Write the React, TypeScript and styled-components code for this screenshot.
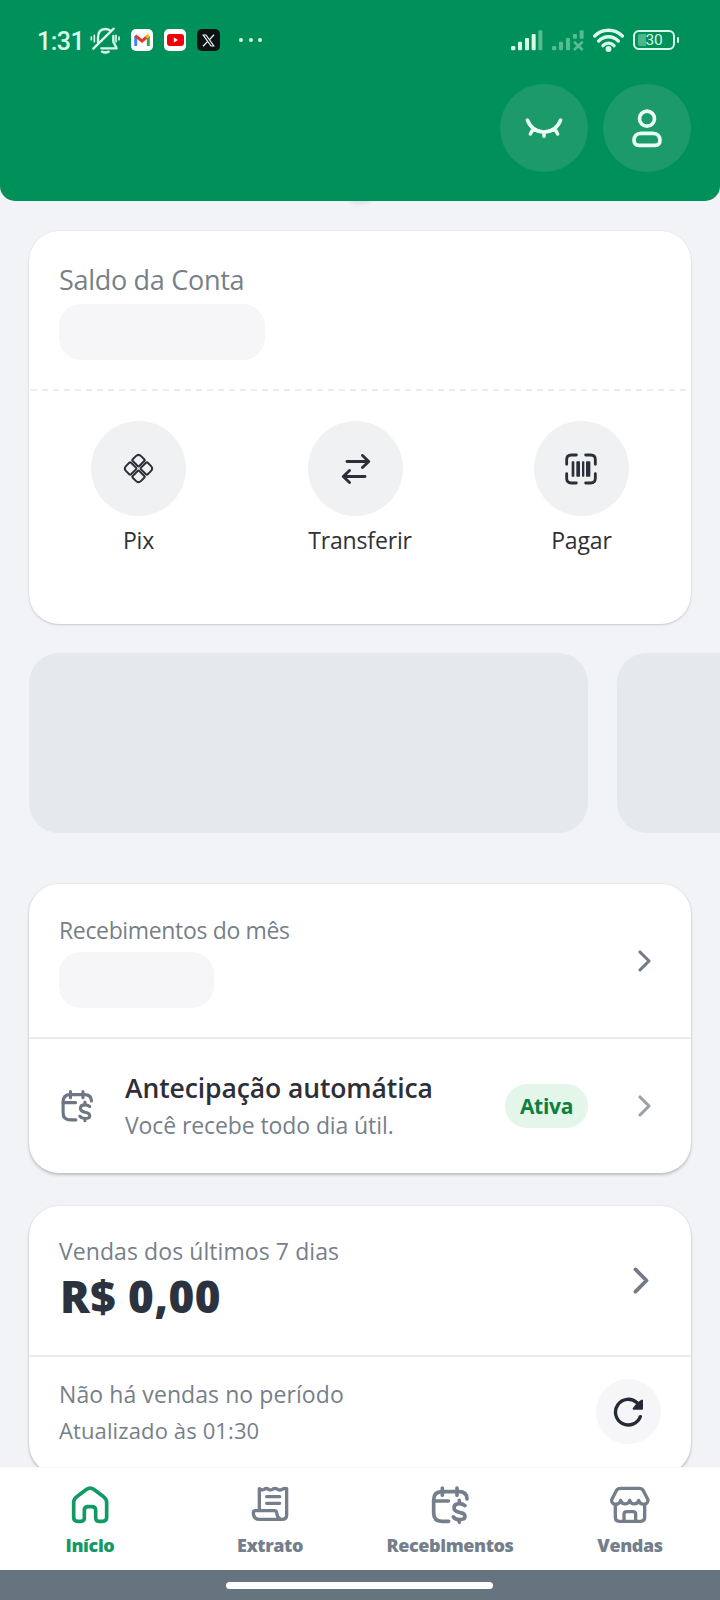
import React from 'react';
import styled, { createGlobalStyle } from 'styled-components';

const GlobalStyle = createGlobalStyle`
  * { box-sizing: border-box; }
  body { margin: 0; background: #f1f3f7; font-family: 'Open Sans', 'Noto Sans', sans-serif; }
  svg { display: block; flex-shrink: 0; }
`;

const Screen = styled.div`
  display: flex;
  flex-direction: column;
  width: 720px;
  height: 1600px;
  overflow: hidden;
  background: #f1f3f7;
`;

const Header = styled.header`
  position: relative;
  z-index: 1;
  height: 201px;
  flex-shrink: 0;
  background: #00905a;
  border-radius: 0 0 15px 15px;
`;

const PullShadow = styled.div`
  position: absolute;
  z-index: 0;
  left: 340px;
  top: 163px;
  width: 40px;
  height: 40px;
  border-radius: 50%;
  background: #e0e3e5;
  box-shadow: 0 0 4px #d3d8da;
`;

const StatusBar = styled.div`
  display: flex;
  justify-content: space-between;
  align-items: center;
  height: 80px;
  padding: 0 41px 0 37px;
  color: #d9fbe8;
`;

const StatusGroup = styled.div<{ $gap: number }>`
  display: flex;
  align-items: center;
  gap: ${(p) => p.$gap}px;
`;

const Clock = styled.span`
  width: 45px;
  margin-right: -3px;
  font: 500 25px/30px Roboto, sans-serif;
  letter-spacing: -0.5px;
  white-space: nowrap;
  padding-top: 3px;
`;

const AppBadge = styled.span<{ $bg: string }>`
  display: grid;
  place-items: center;
  width: 22.5px;
  height: 22.5px;
  border-radius: 5px;
  background: ${(p) => p.$bg};
`;

const Dots = styled.span`
  display: flex;
  gap: 5.4px;
  margin-left: 9px;
  i { width: 4px; height: 4px; border-radius: 50%; background: currentColor; }
`;

const Battery = styled.span`
  position: relative;
  display: flex;
  align-items: center;
  justify-content: center;
  width: 42px;
  height: 20px;
  margin-right: 4px;
  border: 2px solid currentColor;
  border-radius: 6px;
  font: 400 15.5px/18px Roboto, sans-serif;
  letter-spacing: -0.3px;

  &::before {
    content: '';
    position: absolute;
    left: 3px;
    top: 2px;
    width: 8px;
    height: 12px;
    border-radius: 2px 0 0 2px;
    background: rgba(217, 251, 232, 0.35);
  }
  &::after {
    content: '';
    position: absolute;
    right: -6px;
    top: 5px;
    width: 2.5px;
    height: 6px;
    border-radius: 1px;
    background: currentColor;
  }
`;

const HeaderActions = styled.div`
  display: flex;
  justify-content: flex-end;
  gap: 15px;
  padding: 3.5px 29px 0 0;
`;

const HeaderButton = styled.button`
  display: grid;
  place-items: center;
  width: 88px;
  height: 88px;
  padding: 0;
  border: 0;
  border-radius: 50%;
  background: #1d9a69;
  color: #eafff6;
`;

const Content = styled.main`
  flex: 1;
  min-height: 0;
  overflow: hidden;
  padding: 30px 29px 0;
`;

const Card = styled.section<{ $height: number; $top?: number; $lifted?: boolean }>`
  display: flex;
  flex-direction: column;
  height: ${(p) => p.$height}px;
  margin-top: ${(p) => p.$top ?? 0}px;
  border-radius: 30px;
  background: #fff;
  box-shadow: ${(p) => (p.$lifted
    ? '0 2px 3px rgba(60, 66, 74, 0.28), 0 0 2px rgba(60, 66, 74, 0.12)'
    : '0 1px 2px rgba(60, 66, 74, 0.22), 0 0 1px rgba(60, 66, 74, 0.12)')};
`;

const BalanceSection = styled.div`
  height: 158px;
  padding: 33px 30px 0;
`;

const Label = styled.div<{ $size?: number; $track?: number; $gap?: number }>`
  margin-top: ${(p) => p.$gap ?? 0}px;
  font-size: ${(p) => p.$size ?? 23}px;
  line-height: ${(p) => ((p.$size ?? 23) > 25 ? 32 : 28)}px;
  letter-spacing: ${(p) => p.$track ?? 0}px;
  color: #777f89;
  white-space: nowrap;
`;

const ValuePlaceholder = styled.div<{ $width: number; $gap: number }>`
  width: ${(p) => p.$width}px;
  height: 56px;
  margin-top: ${(p) => p.$gap}px;
  border-radius: 22px;
  background: #f6f6f9;
`;

const DashedLine = styled.div`
  height: 2px;
  margin: 0 5px 0 2px;
  background: repeating-linear-gradient(90deg, #e9ebed 0 6px, transparent 6px 11px);
`;

const Actions = styled.div`
  display: flex;
  justify-content: space-around;
  padding: 30px 1px 0;
`;

const Action = styled.button`
  display: flex;
  flex-direction: column;
  gap: 10px;
  padding: 0;
  border: 0;
  background: none;
  font: 400 23px/28px 'Open Sans', 'Noto Sans', sans-serif;
  letter-spacing: -0.15px;
  color: #2f3136;
  text-align: center;
`;

const ActionCircle = styled.span`
  display: grid;
  place-items: center;
  width: 95px;
  height: 95px;
  border-radius: 50%;
  background: #f0f1f3;
  color: #2b2f3a;
`;

const ActionLabel = styled.span`
  width: 100%;
`;

const Banners = styled.div`
  display: flex;
  gap: 29px;
  margin: 29px -29px 0 0;
  overflow: hidden;
`;

const Banner = styled.div`
  flex: 0 0 559px;
  height: 180px;
  border-radius: 30px;
  background: #e5e9ed;
`;

const LinkRow = styled.div<{ $height: number; $right: number }>`
  display: flex;
  align-items: center;
  justify-content: space-between;
  height: ${(p) => p.$height}px;
  padding: 0 ${(p) => p.$right}px 0 30px;
`;

const Divider = styled.hr`
  width: 100%;
  height: 2px;
  margin: 0;
  border: 0;
  background: #e9ebed;
`;

const FeatureRow = styled.div`
  display: flex;
  align-items: center;
  height: 134px;
  padding: 0 40px 0 31px;
  color: #6c7783;
`;

const FeatureText = styled.div`
  flex: 1;
  padding: 0 0 1px 31px;
`;

const FeatureTitle = styled.div`
  margin-bottom: 7px;
  font-size: 26.5px;
  font-weight: 640;
  line-height: 32px;
  letter-spacing: -0.1px;
  color: #2d2f38;
  white-space: nowrap;
`;

const StatusPill = styled.span`
  display: grid;
  place-items: center;
  width: 83px;
  height: 44px;
  margin-right: 50px;
  border-radius: 22px;
  background: #e4f5ea;
  font-size: 21px;
  font-weight: 700;
  letter-spacing: -0.3px;
  color: #0d8040;
`;

const Amount = styled.div`
  margin: 5px 0 0 1px;
  font-size: 44px;
  font-weight: 800;
  line-height: 52px;
  letter-spacing: 0.5px;
  color: #2c333f;
  white-space: nowrap;
`;

const SalesText = styled.div`
  padding-bottom: 3px;
`;

const SummaryRow = styled.div`
  display: flex;
  align-items: center;
  justify-content: space-between;
  padding: 22px 30px 0;
`;

const RefreshButton = styled.button`
  display: grid;
  place-items: center;
  width: 65px;
  height: 65px;
  padding: 0;
  border: 0;
  border-radius: 50%;
  background: #f6f6f9;
  color: #252a34;
`;

const TabBar = styled.nav`
  display: grid;
  grid-template-columns: repeat(4, 1fr);
  height: 103px;
  flex-shrink: 0;
  background: #fff;
  border-top: 1px solid #f8f8f9;
`;

const Tab = styled.a<{ $active?: boolean }>`
  display: flex;
  flex-direction: column;
  align-items: center;
  gap: 8px;
  padding-top: 17px;
  font-size: 18px;
  font-weight: 800;
  line-height: 24px;
  letter-spacing: -0.4px;
  color: ${(p) => (p.$active ? '#139a64' : '#757f8b')};
`;

const SystemBar = styled.footer`
  display: flex;
  justify-content: center;
  align-items: center;
  height: 30px;
  flex-shrink: 0;
  background: #667480;
`;

const HomeHandle = styled.span`
  width: 267px;
  height: 7px;
  margin: 1px 1px 0 0;
  border-radius: 4px;
  background: #fcfdfe;
`;

type LineIconProps = { size?: number; width?: number; box?: number; children: React.ReactNode };

const LineIcon = ({ size = 40, width = 11, box = 120, children }: LineIconProps) => (
  <svg width={size} height={size} viewBox={`0 0 ${box} ${box}`} fill="none" stroke="currentColor"
    strokeWidth={width} strokeLinecap="round" strokeLinejoin="round">
    {children}
  </svg>
);

const Chevron = ({ width, height, color }: { width: number; height: number; color: string }) => (
  <svg width={width} height={height} viewBox="0 0 13 22" fill="none" stroke={color} strokeWidth="3.100"
    strokeLinecap="round" strokeLinejoin="round">
    <path d="M2 2 L11 11 L2 20" />
  </svg>
);

const CalendarMoney = ({ size = 40, width = 11 }: { size?: number; width?: number }) => (
  <LineIcon size={size} width={width}>
    <path d="M56 109H36Q11 109 11 84V45Q11 20 36 20H86Q111 20 111 42" />
    <path d="M37 9V31M81 9V31M11 48H55" />
    <path d="M105 62C99 57 94 56 88 56C78 56 72 61 72 69C72 78 79 80 88 82C99 84 105 87 105 94C105 101 98 104 88 104C80 104 74 101 70 96M88 46V56M88 104V112" />
  </LineIcon>
);

const BellMuted = () => (
  <svg width="30" height="27" viewBox="0 0 90 81" fill="none" stroke="currentColor" strokeWidth="7"
    strokeLinecap="round" strokeLinejoin="round">
    <path d="M10 65L71 5M24 46V33C24 15 33 6 46 6C53 6 57 8 61 11M70 27V44L80 64H34" />
    <path d="M36 74Q46 79 56 74" />
    <path d="M4 30V38M13 25V44M78 25V44M87 30V38" strokeWidth="5" />
  </svg>
);

const Signal = ({ lost = false }: { lost?: boolean }) => (
  <svg width="32" height="21" viewBox="0 0 96 63" fill="currentColor" opacity={lost ? 0.4 : 1}>
    <rect x="0" y="48" width="13" height="13" rx="4" />
    <rect x="21" y="35" width="12" height="26" rx="3" />
    <rect x="42" y="24" width="12" height="37" rx="3" />
    {lost ? (
      <>
        <rect x="63" y="12" width="12" height="14" rx="2" />
        <rect x="83" y="1" width="12" height="25" rx="2" />
        <path d="M66 35L92 60M92 35L66 60" stroke="currentColor" strokeWidth="8" />
      </>
    ) : (
      <>
        <rect x="62" y="12" width="12" height="49" rx="3" />
        <rect x="82" y="1" width="12" height="60" rx="3" opacity="0.4" />
      </>
    )}
  </svg>
);

const Wifi = () => (
  <svg width="31" height="24" viewBox="0 0 93 72" fill="none" stroke="currentColor" strokeWidth="10" strokeLinecap="round">
    <path d="M5 24C28 1 65 1 88 24" />
    <path d="M17 39C34 22 59 22 76 39" />
    <path d="M30 53C39 43 54 43 63 53" />
    <circle cx="46.500" cy="63" r="4" fill="currentColor" />
  </svg>
);

const GmailMark = () => (
  <svg width="16" height="12" viewBox="0 0 16 12" fill="none" strokeWidth="3">
    <path d="M1.700 12V2" stroke="#4285f4" />
    <path d="M14.300 12V2" stroke="#34a853" />
    <path d="M1.200 1.600L8 7L14 2" stroke="#e5392f" />
    <path d="M12.300 3.500L15 1.200" stroke="#fbbc04" />
  </svg>
);

const PlayMark = () => (
  <svg width="17" height="12" viewBox="0 0 17 12">
    <rect width="17" height="12" rx="3" fill="#f00008" />
    <path d="M6.800 3.500L11 6L6.800 8.500Z" fill="#fff" />
  </svg>
);

const CrossMark = () => (
  <svg width="13" height="13" viewBox="0 0 13 13" fill="none" stroke="#eef4f2">
    <path d="M1.200 1H4L11.800 12H9Z" strokeWidth="1.200" />
    <path d="M12 0.700L7.300 5.900M5.700 7.400L1 12.300" strokeWidth="1.300" />
  </svg>
);

const pixTile = 'M2.400 1.200H9.300Q10.600 1.200 10.600 2.500V6.900Q10.600 10.600 6.900 10.600H2.500Q1.200 10.600 1.200 9.300V2.400Q1.200 1.200 2.400 1.200Z';

const PixIcon = () => (
  <LineIcon size={31} box={31} width={2}>
    {[45, 135, 225, 315].map((a) => (
      <path key={a} d={pixTile} transform={`translate(15.500 15.500) rotate(${a})`} />
    ))}
  </LineIcon>
);

const TransferIcon = () => (
  <LineIcon size={30} box={30} width={2.9}>
    <path d="M6 7.500H27.500M21.500 1.500L27.700 7.500L21.500 13.500M24 22.500H2.500M8.500 16.500L2.300 22.500L8.500 28.500" />
  </LineIcon>
);

const BarcodeIcon = () => (
  <LineIcon size={32} box={96} width={8.5}>
    <path d="M5 34V20Q5 6 19 6H34M62 6H77Q91 6 91 20V34M91 62V76Q91 90 77 90H62M34 90H19Q5 90 5 76V62" />
    <g fill="currentColor" stroke="none">
      <rect x="20" y="25" width="8" height="46" rx="2" />
      <rect x="34" y="25" width="11" height="46" rx="2" />
      <rect x="51" y="25" width="7" height="46" rx="2" />
      <rect x="63" y="25" width="13" height="46" rx="2" />
    </g>
  </LineIcon>
);

const RefreshIcon = () => (
  <LineIcon size={31} box={93} width={10}>
    <path d="M82 62A38.500 38.500 0 1 1 72 20" />
    <path d="M87 14V38H62L68 30L78 20Z" fill="currentColor" strokeWidth="6" />
  </LineIcon>
);

const tabs = [
  {
    name: 'Início',
    icon: (
      <LineIcon>
        <path d="M11 52C11 44 15 39 22 34L50 13C57 8 64 8 71 13L99 34C106 39 110 44 110 52V97Q110 109 98 109H87Q77 109 77 99V76Q77 65 66 65H54Q43 65 43 76V99Q43 109 33 109H23Q11 109 11 97Z" />
      </LineIcon>
    ),
  },
  {
    name: 'Extrato',
    icon: (
      <LineIcon width={10}>
        <path d="M28 76V11Q36 17 43 13Q49 8 56 13Q63 17 69 12Q76 8 83 13Q90 17 96 13Q103 9 110 11V89Q110 103 96 103H30Q10 103 10 83Q10 77 16 77H73Q79 77 80 83Q82 103 96 103" />
        <path d="M50 35H89M50 55H89" />
      </LineIcon>
    ),
  },
  { name: 'Recebimentos', icon: <CalendarMoney /> },
  {
    name: 'Vendas',
    icon: (
      <LineIcon width={10}>
        <path d="M5 44L19 17Q23 10 31 10H88Q96 10 100 17L114 44C115 62 90 62 86 46C84 60 62 60 59 46C56 60 34 60 32 46C29 62 3 62 5 44Z" />
        <path d="M16 58V97Q16 109 28 109H92Q104 109 104 97V58M42 108V88Q42 80 50 80H69Q77 80 77 88V108" />
      </LineIcon>
    ),
  },
];

export default function App() {
  return (
    <Screen>
      <GlobalStyle />
      <PullShadow />
      <Header>
        <StatusBar>
          <StatusGroup $gap={10.8}>
            <Clock>1:31</Clock>
            <BellMuted />
            <AppBadge $bg="#fff"><GmailMark /></AppBadge>
            <AppBadge $bg="#fff"><PlayMark /></AppBadge>
            <AppBadge $bg="#0b1413"><CrossMark /></AppBadge>
            <Dots><i /><i /><i /></Dots>
          </StatusGroup>
          <StatusGroup $gap={9}>
            <Signal />
            <Signal lost />
            <Wifi />
            <Battery>30</Battery>
          </StatusGroup>
        </StatusBar>
        <HeaderActions>
          <HeaderButton aria-label="Mostrar valores">
            <LineIcon width={10.5}>
              <path d="M10 36C20 60 38 72 60 72S100 60 110 36M28 62L19 78M60 73V85M92 62L101 78" />
            </LineIcon>
          </HeaderButton>
          <HeaderButton aria-label="Perfil">
            <LineIcon width={11}>
              <circle cx="60" cy="32" r="22.500" />
              <path d="M42 76H78C91 76 99 85 99 97C99 107 93 112 84 112H36C27 112 21 107 21 97C21 85 29 76 42 76Z" />
            </LineIcon>
          </HeaderButton>
        </HeaderActions>
      </Header>

      <Content>
        <Card $height={393}>
          <BalanceSection>
            <Label $size={27} $track={-0.3}>Saldo da Conta</Label>
            <ValuePlaceholder $width={206} $gap={8} />
          </BalanceSection>
          <DashedLine />
          <Actions>
            <Action><ActionCircle><PixIcon /></ActionCircle><ActionLabel>Pix</ActionLabel></Action>
            <Action><ActionCircle><TransferIcon /></ActionCircle><ActionLabel>Transferir</ActionLabel></Action>
            <Action><ActionCircle><BarcodeIcon /></ActionCircle><ActionLabel>Pagar</ActionLabel></Action>
          </Actions>
        </Card>

        <Banners>
          <Banner />
          <Banner />
        </Banners>

        <Card $height={289} $top={51} $lifted>
          <LinkRow $height={153} $right={40}>
            <div>
              <Label $track={-0.35} $gap={3}>Recebimentos do mês</Label>
              <ValuePlaceholder $width={155} $gap={8} />
            </div>
            <Chevron width={13} height={22} color="#737b85" />
          </LinkRow>
          <Divider />
          <FeatureRow>
            <CalendarMoney size={34} />
            <FeatureText>
              <FeatureTitle>Antecipação automática</FeatureTitle>
              <Label $track={-0.1}>Você recebe todo dia útil.</Label>
            </FeatureText>
            <StatusPill>Ativa</StatusPill>
            <Chevron width={13} height={22} color="#99a1a9" />
          </FeatureRow>
        </Card>

        <Card $height={268} $top={33} $lifted>
          <LinkRow $height={149} $right={42}>
            <SalesText>
              <Label $track={0.08}>Vendas dos últimos 7 dias</Label>
              <Amount>R$ 0,00</Amount>
            </SalesText>
            <Chevron width={16} height={27} color="#737b85" />
          </LinkRow>
          <Divider />
          <SummaryRow>
            <div>
              <Label $track={0.08}>Não há vendas no período</Label>
              <Label $size={22} $track={0.12} $gap={8}>Atualizado às 01:30</Label>
            </div>
            <RefreshButton aria-label="Atualizar"><RefreshIcon /></RefreshButton>
          </SummaryRow>
        </Card>
      </Content>

      <TabBar>
        {tabs.map((t, i) => (
          <Tab key={t.name} $active={i === 0}>
            {t.icon}
            <span>{t.name}</span>
          </Tab>
        ))}
      </TabBar>
      <SystemBar><HomeHandle /></SystemBar>
    </Screen>
  );
}
